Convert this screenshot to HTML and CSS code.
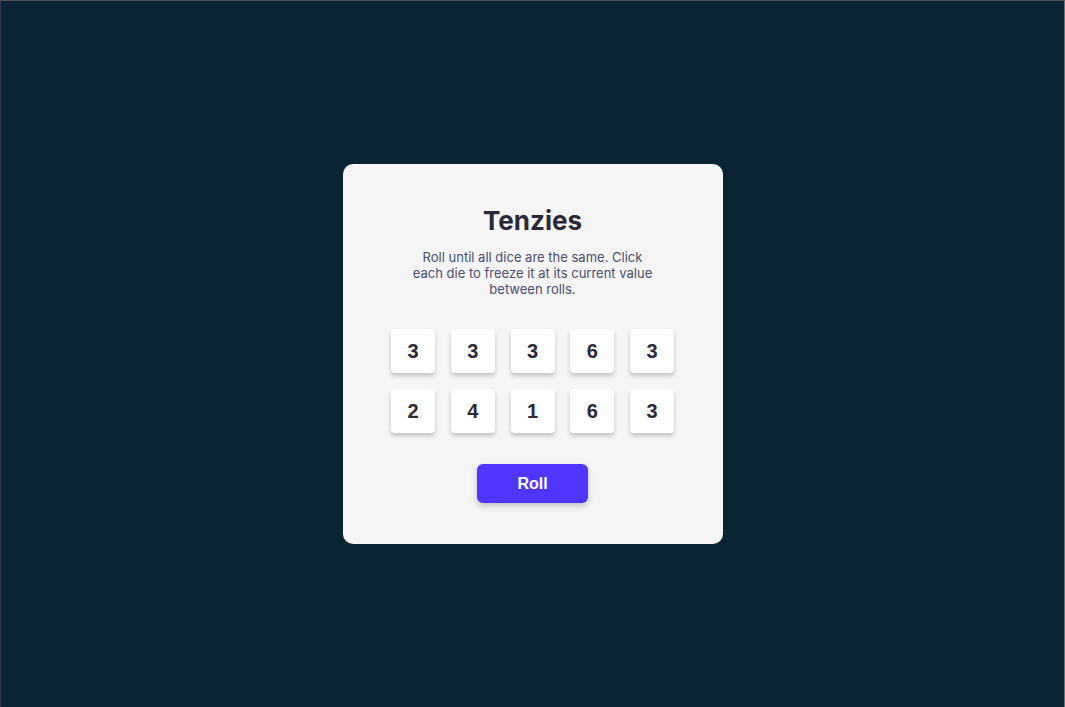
FILE: index.html
```html
<!DOCTYPE html>
<html lang="en">
<head>
<meta charset="utf-8">
<title>Tenzies</title>
<link rel="stylesheet" href="styles.css">
</head>
<body>
<div class="frame">
  <main class="panel">
    <h1 class="title">Tenzies</h1>
    <p class="instructions">Roll until all dice are the same. Click each die to freeze it at its current value between rolls.</p>
    <div class="dice">
      <button class="die">3</button>
      <button class="die">3</button>
      <button class="die">3</button>
      <button class="die">6</button>
      <button class="die">3</button>
      <button class="die">2</button>
      <button class="die">4</button>
      <button class="die">1</button>
      <button class="die">6</button>
      <button class="die">3</button>
    </div>
    <button class="roll">Roll</button>
  </main>
</div>
</body>
</html>
```
FILE: styles.css
```css
* { box-sizing: border-box; }
html, body { margin: 0; padding: 0; height: 100%; }
body {
  background: #0b2434;
  font-family: Inter, "Noto Sans", sans-serif;
}
.frame {
  height: 100%;
  border-top: 1px solid #4e4e52;
  border-left: 1px solid #3a3550;
  border-right: 1px solid #6e6e72;
  display: flex;
  align-items: center;
  justify-content: center;
}
.panel {
  width: 380px;
  height: 380px;
  background: #f5f5f5;
  border-radius: 10px;
  padding-top: 41px;
  display: flex;
  flex-direction: column;
  align-items: center;
}
.title {
  margin: 0;
  font-size: 26px;
  line-height: 32px;
  font-weight: 700;
  color: #2b283a;
}
.instructions {
  margin: 12px 0 0;
  width: 250px;
  text-align: center;
  font-size: 13px;
  line-height: 16px;
  color: #4a4e74;
}
.dice {
  margin-top: 32px;
  display: grid;
  grid-template-columns: repeat(5, 44px);
  column-gap: 15.75px;
  row-gap: 16px;
}
.die {
  width: 44px;
  height: 44px;
  border: none;
  border-radius: 4px;
  background: #ffffff;
  box-shadow: 0 3px 4px rgba(0, 0, 0, 0.2);
  font-family: "Liberation Sans", Arial, sans-serif;
  font-weight: 700;
  font-size: 20px;
  color: #2b283a;
  padding: 0;
}
.roll {
  margin-top: 31px;
  width: 111px;
  height: 39px;
  border: none;
  border-radius: 6px;
  background: #5035ff;
  color: #ffffff;
  font-family: "Liberation Sans", Arial, sans-serif;
  font-weight: 700;
  font-size: 16px;
  box-shadow: 0 3px 6px rgba(0, 0, 0, 0.22);
  padding: 0;
}
```
